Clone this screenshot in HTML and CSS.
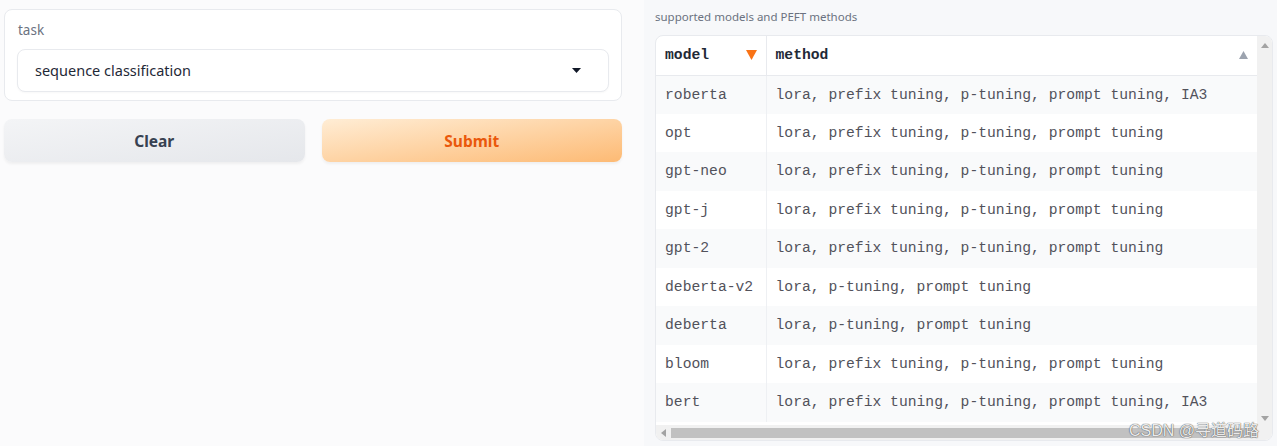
FILE: index.html
```html
<!DOCTYPE html>
<html>
<head>
<meta charset="utf-8">
<link rel="stylesheet" href="styles.css">
</head>
<body>
<div class="app">
  <div class="left">
    <div class="card">
      <div class="label">task</div>
      <div class="select">
        <span>sequence classification</span>
        <svg class="caret" width="9" height="5" viewBox="0 0 9 5"><path d="M0 0h9L4.5 5z" fill="#111827"/></svg>
      </div>
    </div>
    <div class="buttons">
      <button class="btn clear">Clear</button>
      <button class="btn submit">Submit</button>
    </div>
  </div>
  <div class="right">
    <div class="tlabel">supported models and PEFT methods</div>
    <div class="tbox">
      <div class="tview">
        <table>
          <thead>
            <tr><th class="c1"><div class="th"><span>model</span><svg width="11" height="10" viewBox="0 0 11 10"><path d="M0 0h11L5.5 10z" fill="#f97316"/></svg></div></th><th class="c2"><div class="th"><span>method</span><svg width="9" height="8" viewBox="0 0 9 8"><path d="M0 8h9L4.5 0z" fill="#9ca3af"/></svg></div></th></tr>
          </thead>
          <tbody>
            <tr><td>roberta</td><td>lora, prefix tuning, p-tuning, prompt tuning, IA3</td></tr>
            <tr><td>opt</td><td>lora, prefix tuning, p-tuning, prompt tuning</td></tr>
            <tr><td>gpt-neo</td><td>lora, prefix tuning, p-tuning, prompt tuning</td></tr>
            <tr><td>gpt-j</td><td>lora, prefix tuning, p-tuning, prompt tuning</td></tr>
            <tr><td>gpt-2</td><td>lora, prefix tuning, p-tuning, prompt tuning</td></tr>
            <tr><td>deberta-v2</td><td>lora, p-tuning, prompt tuning</td></tr>
            <tr><td>deberta</td><td>lora, p-tuning, prompt tuning</td></tr>
            <tr><td>bloom</td><td>lora, prefix tuning, p-tuning, prompt tuning</td></tr>
            <tr><td>bert</td><td>lora, prefix tuning, p-tuning, prompt tuning, IA3</td></tr>
          </tbody>
        </table>
      </div>
      <div class="vscroll">
        <svg width="8" height="5" viewBox="0 0 8 5"><path d="M0 5h8L4 0z" fill="#a3a3a3"/></svg>
        <svg width="8" height="5" viewBox="0 0 8 5"><path d="M0 0h8L4 5z" fill="#a3a3a3"/></svg>
      </div>
      <div class="hscroll">
        <svg width="5" height="8" viewBox="0 0 5 8"><path d="M5 0v8L0 4z" fill="#a3a3a3"/></svg>
        <div class="thumb"></div>
      </div>
      <div class="corner"></div>
    </div>
    <div class="watermark">CSDN @寻道码路</div>
  </div>
</div>
</body>
</html>
```

FILE: styles.css
```css
* { box-sizing: border-box; }
html, body { margin: 0; padding: 0; }
body {
  background: #fbfbfc;
  font-family: "Noto Sans", "Open Sans", sans-serif;
  width: 1277px;
  height: 446px;
  overflow: hidden;
}
.app {
  display: flex;
  gap: 22px;
  padding: 0 0 0 4px;
}
.left {
  width: 618px;
  flex-shrink: 0;
  padding-top: 9px;
  display: flex;
  flex-direction: column;
  gap: 18px;
}
.card {
  background: #fff;
  border: 1px solid #e8eaee;
  border-radius: 8px;
  padding: 10px 12px 9px 12px;
  height: 92px;
}
.label {
  font-size: 13.5px;
  color: #6b7280;
  line-height: 20px;
  margin-bottom: 9px;
  padding-left: 1px;
}
.select {
  height: 43px;
  border: 1px solid #e8eaee;
  border-radius: 8px;
  background: #fff;
  display: flex;
  align-items: center;
  justify-content: space-between;
  padding: 0 27px 0 17px;
  font-size: 14.5px;
  color: #1f2937;
  box-shadow: 0 1px 2px rgba(0,0,0,0.03);
}
.select span { position: relative; top: -1px; }
.caret { display: block; }
.buttons {
  display: flex;
  gap: 17px;
}
.btn {
  flex: 1;
  height: 43px;
  border: none;
  border-radius: 8px;
  font-family: "Noto Sans", sans-serif;
  font-weight: 700;
  font-size: 15.5px;
  box-shadow: 0 2px 3px rgba(0,0,0,0.05);
}
.clear {
  background: linear-gradient(to bottom right, #f3f4f6, #e5e7eb);
  color: #374151;
}
.submit {
  background: linear-gradient(to bottom right, #ffedd5, #fdba74);
  color: #ea580c;
}
.right {
  flex: 1;
  min-width: 0;
  background: #f7f8fa;
  padding: 8px 0 0 11px;
  position: relative;
  height: 446px;
  overflow: hidden;
}
.tlabel {
  font-size: 11.5px;
  color: #6b7280;
  line-height: 18px;
  margin-bottom: 9px;
}
.tbox {
  width: 618px;
  height: 406px;
  border: 1px solid #e8eaee;
  border-radius: 8px;
  background: #fff;
  display: grid;
  grid-template-columns: 1fr 15px;
  grid-template-rows: 1fr 15px;
  overflow: hidden;
}
.tview {
  overflow: hidden;
}
table {
  border-collapse: collapse;
  font-family: "Liberation Mono", "DejaVu Sans Mono", monospace;
  font-size: 14.7px;
  width: 100%;
}
th, td {
  text-align: left;
  padding: 0 9px;
  white-space: nowrap;
}
th {
  height: 39px;
  color: #1f2937;
  font-weight: 700;
  border-bottom: 1px solid #e8eaee;
}
th.c1 { width: 110px; border-right: 1px solid #e8eaee; }
.th {
  display: flex;
  align-items: center;
  justify-content: space-between;
}
td {
  height: 38.5px;
  color: #52525b;
}
td:first-child { border-right: 1px solid #eef0f3; }
tbody tr:nth-child(odd) td { background: #f9fafb; }
.vscroll {
  background: #f1f1f1;
  display: flex;
  flex-direction: column;
  justify-content: space-between;
  align-items: center;
  padding: 7px 0 4px;
}
.hscroll {
  background: #f1f1f1;
  display: flex;
  align-items: center;
  gap: 5px;
  padding: 0 0 0 5px;
}
.thumb {
  flex: 1;
  height: 10px;
  background: #c1c1c1;
}
.corner { background: #f1f1f1; }
.watermark {
  position: absolute;
  left: 485px;
  top: 417px;
  font-size: 16px;
  color: rgba(255,255,255,0.9);
  text-shadow: 0 0 1px #555, 0 0 1px #555;
  font-family: "Liberation Sans", "Noto Sans CJK SC", sans-serif;
}
```
